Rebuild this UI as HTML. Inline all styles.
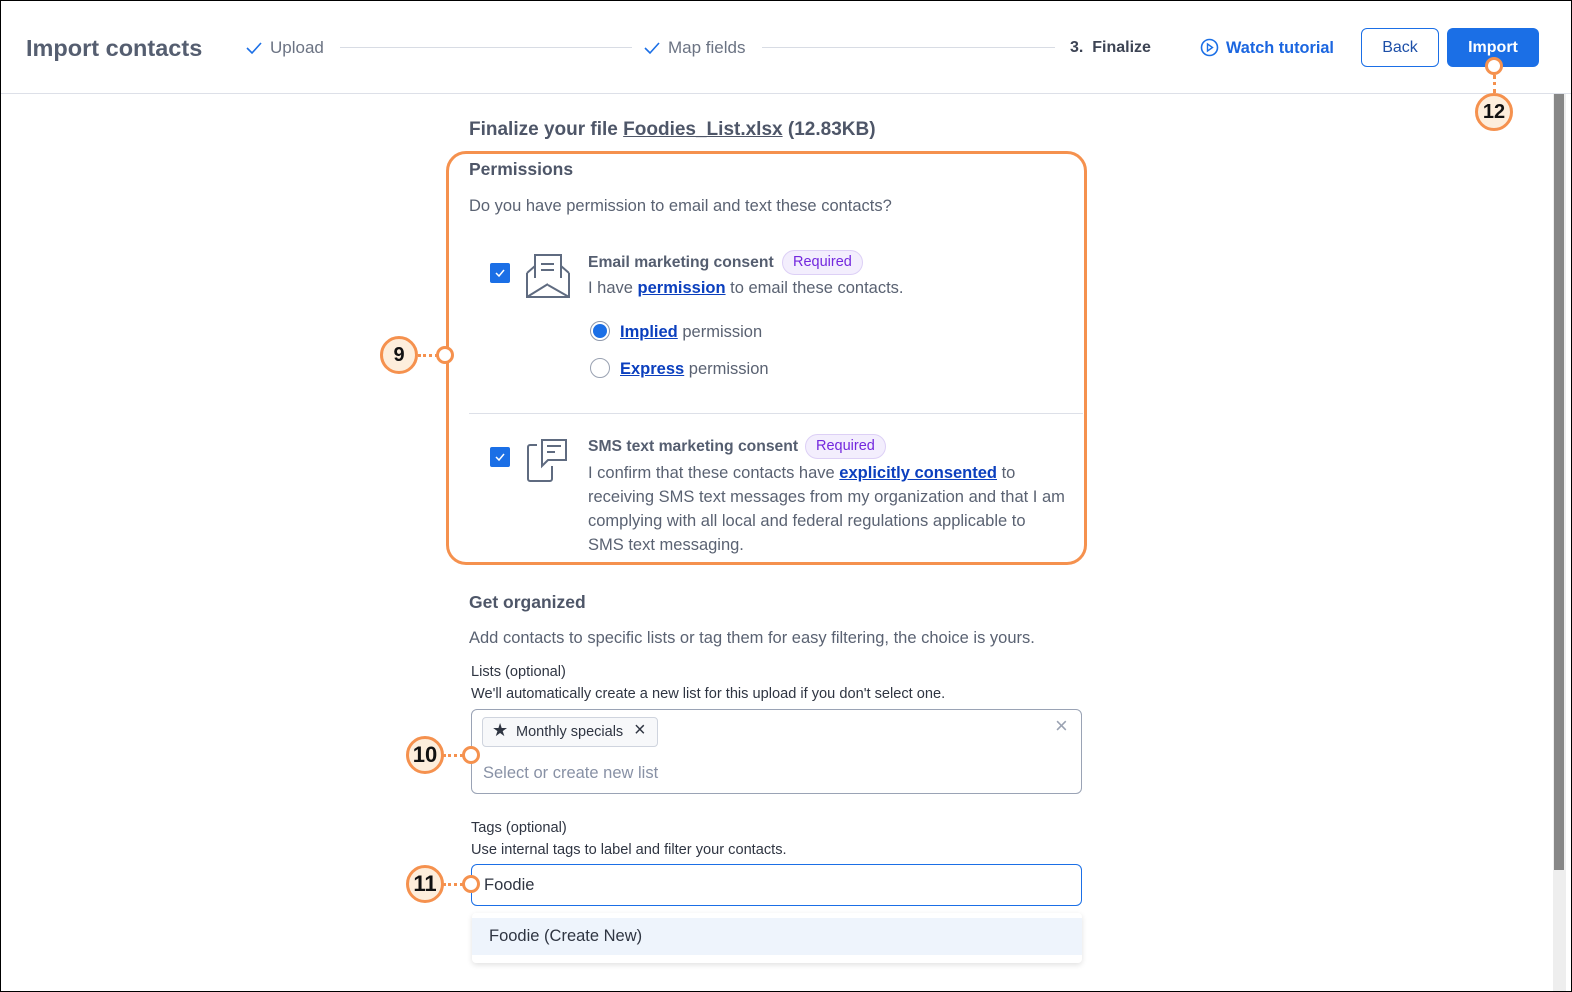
<!DOCTYPE html>
<html><head><meta charset="utf-8"><style>
*{margin:0;padding:0;box-sizing:border-box}
body{width:1572px;height:992px;position:relative;overflow:hidden;background:#fff;font-family:"Liberation Sans",sans-serif;color:#5a6272}
.a{position:absolute;white-space:nowrap}
.frame{position:absolute;left:0;top:0;width:1572px;height:992px;border:1px solid #000;pointer-events:none;z-index:50}
a{color:#0b3fbe;font-weight:bold;text-decoration:underline}
.b{font-weight:bold}
.cb{position:absolute;width:20px;height:20px;background:#1b6fe6;border-radius:2px}
.ann{position:absolute;width:38px;height:38px;border-radius:50%;background:#fdeedc;border:3px solid #f5914e;font-weight:bold;color:#111;font-size:20px;text-align:center;line-height:32px;z-index:5}
.dot{position:absolute;width:18px;height:18px;border-radius:50%;background:#fff;border:3px solid #f5914e;z-index:6}
.dl{position:absolute;border-top:3px dotted #f5914e;height:0;z-index:4}
.req{position:absolute;height:25px;border-radius:13px;background:#f3eefd;border:1px solid #ddd0f6;color:#7328de;font-size:14.5px;line-height:23px;padding:0 10px}
.t{font-size:16.5px}
.s{font-size:14.6px;color:#2f3542}
</style></head><body>
<div class="frame"></div>
<div class="a b" style="left:26px;top:35px;font-size:23.5px;color:#555e70">Import contacts</div>
<svg class="a" style="left:246px;top:41px" width="16" height="14"><path d="M1 7l5 5 9-10" fill="none" stroke="#1b6fe6" stroke-width="1.6"/></svg>
<div class="a" style="left:270px;top:38px;font-size:17px;color:#6b7383">Upload</div>
<div class="a" style="left:340px;top:47px;width:292px;height:1px;background:#d8dce4"></div>
<svg class="a" style="left:644px;top:41px" width="16" height="14"><path d="M1 7l5 5 9-10" fill="none" stroke="#1b6fe6" stroke-width="1.6"/></svg>
<div class="a" style="left:668px;top:38px;font-size:17px;color:#6b7383">Map fields</div>
<div class="a" style="left:762px;top:47px;width:293px;height:1px;background:#d8dce4"></div>
<div class="a b" style="left:1070px;top:39px;font-size:16px;color:#3d4454">3.&nbsp; Finalize</div>
<svg class="a" style="left:1200px;top:38px" width="19" height="19"><circle cx="9.5" cy="9.5" r="8" fill="none" stroke="#1b6fe6" stroke-width="1.6"/><path d="M7.5 6v7l5-3.5z" fill="none" stroke="#1b6fe6" stroke-width="1.4"/></svg>
<div class="a b" style="left:1226px;top:39px;font-size:16.3px;color:#1b66e0">Watch tutorial</div>
<div class="a" style="left:1361px;top:28px;width:78px;height:39px;border:1px solid #1b6fe6;border-radius:6px;text-align:center;line-height:37px;font-size:16px;color:#1d4fa8">Back</div>
<div class="a b" style="left:1447px;top:28px;width:92px;height:39px;background:#1b6fe6;border-radius:6px;text-align:center;line-height:39px;font-size:16px;color:#fff">Import</div>
<div class="a" style="left:0;top:93px;width:1572px;height:1px;background:#dde0e8"></div>
<div class="dot" style="left:1485px;top:57px"></div>
<div class="a" style="left:1493px;top:75px;width:0;height:18px;border-left:3px dotted #f5914e"></div>
<div class="ann" style="left:1475px;top:93px">12</div>
<div class="a" style="left:1553px;top:94px;width:13px;height:897px;background:#eeeeee"></div>
<div class="a" style="left:1554px;top:94px;width:10px;height:776px;background:#878787"></div>

<div class="a b" style="left:469px;top:119px;font-size:19px;color:#4e5668">Finalize your file <u>Foodies_List.xlsx</u> (12.83KB)</div>
<div class="a" style="left:446px;top:151px;width:641px;height:414px;border:3px solid #f5914e;border-radius:20px"></div>
<div class="a b" style="left:469px;top:159px;font-size:17.5px;color:#4e5668">Permissions</div>
<div class="a t" style="left:469px;top:197px">Do you have permission to email and text these contacts?</div>

<div class="cb" style="left:490px;top:263px"><svg width="20" height="20"><path d="M6 10l3 3 5-6" fill="none" stroke="#fff" stroke-width="1.5"/></svg></div>
<svg class="a" style="left:526px;top:254px" width="44" height="44" fill="none" stroke="#5f6b80" stroke-width="2"><path d="M1 19v24h42V19M1 19l8-7M43 19l-8-7M1 43l21-13M43 43L22 31"/><path d="M9 24V1h26v23"/><path d="M15 10h13M15 16h13"/></svg>
<div class="a b" style="left:588px;top:254px;font-size:15.7px;color:#555e70">Email marketing consent</div>
<div class="req" style="left:782px;top:250px">Required</div>
<div class="a t" style="left:588px;top:279px">I have <a>permission</a> to email these contacts.</div>
<div class="a" style="left:590px;top:321px;width:20px;height:20px;border-radius:50%;border:1px solid #8f98aa;background:#fff"><div style="margin:2px;width:14px;height:14px;border-radius:50%;background:#1b6fe6"></div></div>
<div class="a t" style="left:620px;top:323px"><a>Implied</a> permission</div>
<div class="a" style="left:590px;top:358px;width:20px;height:20px;border-radius:50%;border:1px solid #9aa2b2;background:#fff"></div>
<div class="a t" style="left:620px;top:360px"><a>Express</a> permission</div>
<div class="a" style="left:469px;top:413px;width:614px;height:1px;background:#dde0e8"></div>

<div class="cb" style="left:490px;top:447px"><svg width="20" height="20"><path d="M6 10l3 3 5-6" fill="none" stroke="#fff" stroke-width="1.5"/></svg></div>
<svg class="a" style="left:527px;top:438px" width="42" height="45" fill="none" stroke="#5f6b80" stroke-width="2"><path d="M10 7H3a2 2 0 0 0-2 2v32a2 2 0 0 0 2 2h20a2 2 0 0 0 2-2V28"/><path d="M15 2h24v20H21l-6 6z"/><path d="M20 8h14M20 14h8"/></svg>
<div class="a b" style="left:588px;top:438px;font-size:15.7px;color:#555e70">SMS text marketing consent</div>
<div class="req" style="left:805px;top:434px">Required</div>
<div class="a t" style="left:588px;top:461px;line-height:24px">I confirm that these contacts have <a>explicitly consented</a> to<br>receiving SMS text messages from my organization and that I am<br>complying with all local and federal regulations applicable to<br>SMS text messaging.</div>
<div class="dot" style="left:436px;top:346px"></div>
<div class="dl" style="left:418px;top:354px;width:20px"></div>
<div class="ann" style="left:380px;top:336px">9</div>

<div class="a b" style="left:469px;top:592px;font-size:17.5px;color:#4e5668">Get organized</div>
<div class="a t" style="left:469px;top:629px">Add contacts to specific lists or tag them for easy filtering, the choice is yours.</div>
<div class="a s" style="left:471px;top:664px">Lists (optional)</div>
<div class="a s" style="left:471px;top:686px">We'll automatically create a new list for this upload if you don't select one.</div>
<div class="a" style="left:471px;top:709px;width:611px;height:85px;border:1px solid #9aa3b5;border-radius:6px"></div>
<div class="a" style="left:482px;top:717px;width:176px;height:30px;border:1px solid #cfd4de;border-radius:4px;background:#f7f8fa;font-size:14.5px;color:#2f3542;line-height:28px;padding-left:33px">Monthly specials</div>
<div class="a" style="left:492px;top:720px;font-size:18px;color:#2f3542">★</div>
<div class="a" style="left:634px;top:719px;font-size:20px;color:#2f3542">×</div>
<div class="a" style="left:1055px;top:713px;font-size:22px;color:#9aa2b2">×</div>
<div class="a t" style="left:483px;top:764px;color:#8891a5">Select or create new list</div>
<div class="dot" style="left:462px;top:746px"></div>
<div class="dl" style="left:443px;top:754px;width:20px"></div>
<div class="ann" style="left:406px;top:736px;font-size:22px">10</div>

<div class="a s" style="left:471px;top:820px">Tags (optional)</div>
<div class="a s" style="left:471px;top:842px">Use internal tags to label and filter your contacts.</div>
<div class="a" style="left:471px;top:864px;width:611px;height:42px;border:1.5px solid #1b6fe6;border-radius:6px"></div>
<div class="a t" style="left:484px;top:876px;color:#2f3542">Foodie</div>
<div class="dot" style="left:462px;top:875px"></div>
<div class="dl" style="left:443px;top:883px;width:20px"></div>
<div class="ann" style="left:406px;top:865px;font-size:22px">11</div>
<div class="a" style="left:472px;top:913px;width:610px;height:50px;background:#fff;border-radius:4px;box-shadow:0 2px 6px rgba(0,0,0,.12)"></div>
<div class="a" style="left:472px;top:918px;width:610px;height:37px;background:#eef4fc"></div>
<div class="a t" style="left:489px;top:927px;color:#2f3542">Foodie (Create New)</div>
</body></html>
